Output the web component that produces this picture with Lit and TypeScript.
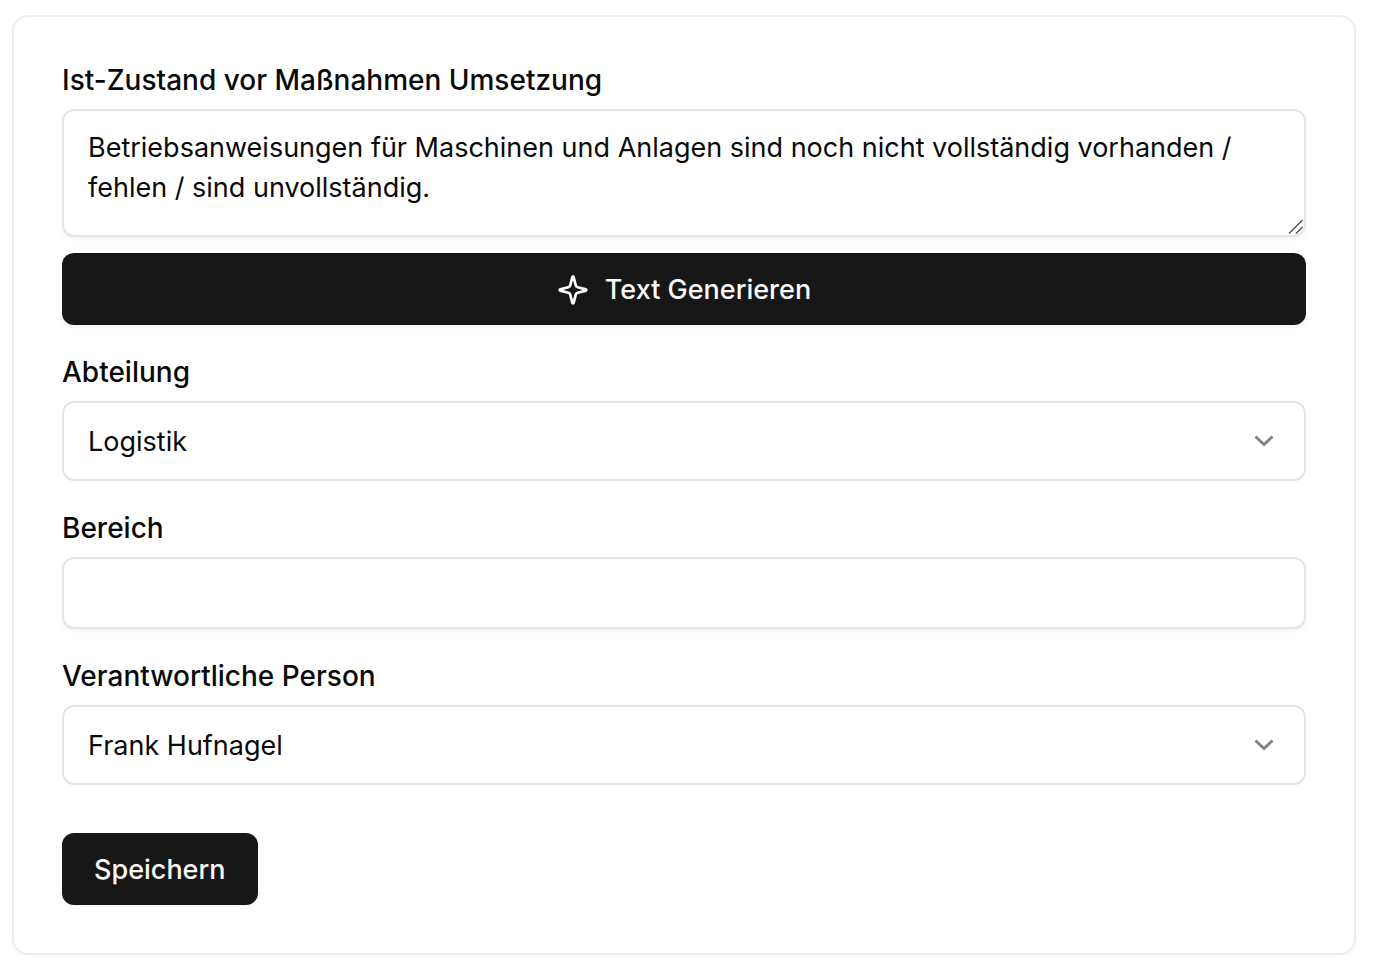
import { LitElement, html, css } from "lit";
import { customElement, state } from "lit/decorators.js";

const chevron = html`<svg class="chevron" viewBox="0 0 24 24" aria-hidden="true">
  <path d="M3.5 7.5 L12 15.5 L20.5 7.5" />
</svg>`;

const sparkle = html`<svg class="sparkle" viewBox="0 0 24 24" aria-hidden="true">
  <path d="M9.937 15.5A2 2 0 0 0 8.5 14.063l-6.135-1.582a.5.5 0 0 1 0-.962L8.5 9.936A2 2 0 0 0 9.937 8.5l1.582-6.135a.5.5 0 0 1 .963 0L14.063 8.5A2 2 0 0 0 15.5 9.937l6.135 1.581a.5.5 0 0 1 0 .964L15.5 14.063a2 2 0 0 0-1.437 1.437l-1.582 6.135a.5.5 0 0 1-.963 0z" />
</svg>`;

@customElement("app-root")
export class AppRoot extends LitElement {
  @state() private description =
    "Betriebsanweisungen für Maschinen und Anlagen sind noch nicht vollständig vorhanden / fehlen / sind unvollständig.";

  static styles = css`
    :host {
      display: block;
      padding: 15px 32px 20px 12px;
      background: #fff;
      color: #0a0a0a;
      font-family: Inter, sans-serif;
      font-size: 27px;
      line-height: 40px;
    }
    *, *::before, *::after { box-sizing: border-box; }
    .card {
      display: flex;
      flex-direction: column;
      gap: 32px;
      padding: 48px;
      border: 2px solid #efefef;
      border-radius: 16px;
      box-shadow: 0 2px 4px rgba(0, 0, 0, 0.02);
    }
    .field { display: flex; flex-direction: column; gap: 14px; }
    .stack { display: flex; flex-direction: column; gap: 16px; }
    label { font-size: 28px; font-weight: 500; line-height: 30px; }
    textarea, input, select, button {
      display: block;
      margin: 0;
      font: inherit;
      color: inherit;
      border-radius: 12px;
    }
    textarea, input, select {
      width: 100%;
      border: 2px solid #e5e5e5;
      background: #fff;
      padding: 16px 24px 14px;
    }
    textarea, input, button { box-shadow: 0 2px 4px rgba(0, 0, 0, 0.05); }
    textarea { height: 128px; padding-top: 17px; resize: vertical; }
    textarea::-webkit-resizer { background: transparent; }
    input { height: 72px; }
    select { height: 80px; appearance: none; }
    .overlay { display: grid; align-items: center; }
    .overlay > * { grid-area: 1 / 1; }
    .chevron, .grip {
      justify-self: end;
      pointer-events: none;
      fill: none;
    }
    .chevron {
      width: 24px;
      height: 24px;
      margin-right: 30px;
      stroke: #808080;
      stroke-width: 2.8;
    }
    .grip {
      align-self: end;
      width: 16px;
      height: 16px;
      margin: 2px;
      stroke: #555;
      stroke-width: 1.5;
    }
    button {
      display: flex;
      align-items: center;
      justify-content: center;
      gap: 16px;
      padding: 17px 32px 15px;
      border: 0;
      background: #171717;
      color: #fafafa;
      font-weight: 500;
    }
    .save { align-self: flex-start; margin-top: 16px; }
    .sparkle {
      width: 32px;
      height: 32px;
      fill: none;
      stroke: currentColor;
      stroke-width: 2;
      stroke-linecap: round;
      stroke-linejoin: round;
    }
  `;

  private picker(id: string, label: string, value: string) {
    return html`<div class="field">
      <label for=${id}>${label}</label>
      <div class="overlay">
        <select id=${id}><option>${value}</option></select>
        ${chevron}
      </div>
    </div>`;
  }

  render() {
    return html`<form class="card" @submit=${(e: Event) => e.preventDefault()}>
      <div class="field">
        <label for="state">Ist-Zustand vor Maßnahmen Umsetzung</label>
        <div class="stack">
          <div class="overlay">
            <textarea id="state" .value=${this.description}></textarea>
            <svg class="grip" viewBox="0 0 16 16" aria-hidden="true">
              <path d="M1 14.5 L14.5 1 M8 14.5 L14.5 8" />
            </svg>
          </div>
          <button type="button">${sparkle}Text Generieren</button>
        </div>
      </div>
      ${this.picker("department", "Abteilung", "Logistik")}
      <div class="field">
        <label for="area">Bereich</label>
        <input id="area" type="text" />
      </div>
      ${this.picker("person", "Verantwortliche Person", "Frank Hufnagel")}
      <button class="save" type="submit">Speichern</button>
    </form>`;
  }
}
